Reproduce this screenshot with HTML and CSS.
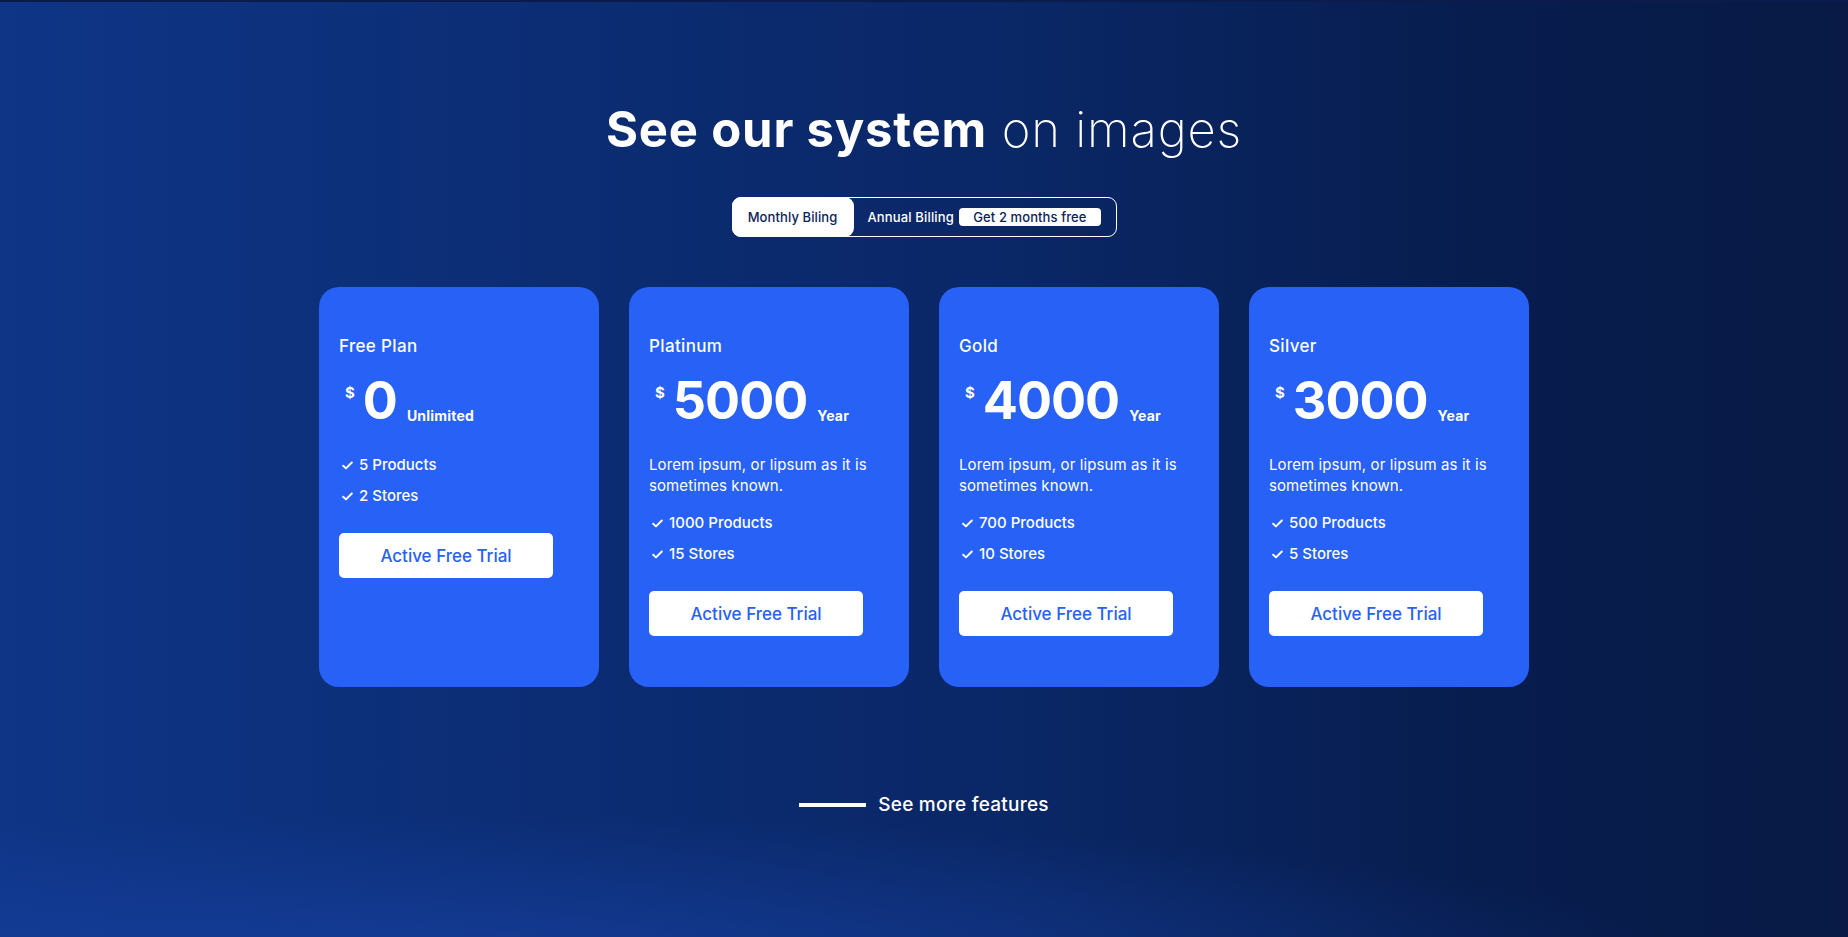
FILE: index.html
```html
<!DOCTYPE html>
<html lang="en">
<head>
<meta charset="utf-8">
<title>Pricing</title>
<link rel="stylesheet" href="styles.css">
</head>
<body>
<main class="page">
  <h1 class="title"><strong>See our system</strong> <span class="light">on images</span></h1>

  <div class="toggle">
    <button class="toggle-opt active">Monthly Biling</button>
    <div class="toggle-opt annual">Annual Billing <span class="badge">Get 2 months free</span></div>
  </div>

  <section class="cards">
    <article class="card">
      <h2 class="plan">Free Plan</h2>
      <div class="price"><span class="cur">$</span><span class="amount">0</span><span class="period">Unlimited</span></div>
      <ul class="features">
        <li><svg class="check" viewBox="0 0 12 10"><path d="M1.2 5.3 L4.3 8.2 L10.8 1.6"/></svg>5 Products</li>
        <li><svg class="check" viewBox="0 0 12 10"><path d="M1.2 5.3 L4.3 8.2 L10.8 1.6"/></svg>2 Stores</li>
      </ul>
      <a class="btn">Active Free Trial</a>
    </article>

    <article class="card">
      <h2 class="plan">Platinum</h2>
      <div class="price"><span class="cur">$</span><span class="amount">5000</span><span class="period">Year</span></div>
      <p class="desc">Lorem ipsum, or lipsum as it is sometimes known.</p>
      <ul class="features">
        <li><svg class="check" viewBox="0 0 12 10"><path d="M1.2 5.3 L4.3 8.2 L10.8 1.6"/></svg>1000 Products</li>
        <li><svg class="check" viewBox="0 0 12 10"><path d="M1.2 5.3 L4.3 8.2 L10.8 1.6"/></svg>15 Stores</li>
      </ul>
      <a class="btn">Active Free Trial</a>
    </article>

    <article class="card">
      <h2 class="plan">Gold</h2>
      <div class="price"><span class="cur">$</span><span class="amount">4000</span><span class="period">Year</span></div>
      <p class="desc">Lorem ipsum, or lipsum as it is sometimes known.</p>
      <ul class="features">
        <li><svg class="check" viewBox="0 0 12 10"><path d="M1.2 5.3 L4.3 8.2 L10.8 1.6"/></svg>700 Products</li>
        <li><svg class="check" viewBox="0 0 12 10"><path d="M1.2 5.3 L4.3 8.2 L10.8 1.6"/></svg>10 Stores</li>
      </ul>
      <a class="btn">Active Free Trial</a>
    </article>

    <article class="card">
      <h2 class="plan">Silver</h2>
      <div class="price"><span class="cur">$</span><span class="amount">3000</span><span class="period">Year</span></div>
      <p class="desc">Lorem ipsum, or lipsum as it is sometimes known.</p>
      <ul class="features">
        <li><svg class="check" viewBox="0 0 12 10"><path d="M1.2 5.3 L4.3 8.2 L10.8 1.6"/></svg>500 Products</li>
        <li><svg class="check" viewBox="0 0 12 10"><path d="M1.2 5.3 L4.3 8.2 L10.8 1.6"/></svg>5 Stores</li>
      </ul>
      <a class="btn">Active Free Trial</a>
    </article>
  </section>

  <a class="more"><span class="more-line"></span>See more features</a>
</main>
</body>
</html>
```

FILE: styles.css
```css
* { box-sizing: border-box; }

html, body {
  margin: 0;
  padding: 0;
}

body {
  font-family: "Inter", "Noto Sans", sans-serif;
  color: #fff;
  background: #0a2663;
}

.page {
  min-height: 937px;
  display: flex;
  flex-direction: column;
  align-items: center;
  padding-top: 98px;
  border-top: 2px solid #0a1b4c;
  background:
    radial-gradient(ellipse 70% 16% at 22% 103%, rgba(24, 66, 165, 0.7), rgba(24, 66, 165, 0) 100%),
    linear-gradient(90deg, #0e3586 0%, #0c2d74 30%, #0a2766 55%, #071d4e 80%, #081a45 100%);
}

.title {
  margin: 0;
  font-size: 49px;
  line-height: 60px;
  font-weight: 300;
  letter-spacing: 0.8px;
}

.title strong { font-weight: 700; }
.title .light { font-weight: 200; }

.toggle {
  margin-top: 37px;
  display: flex;
  align-items: center;
  width: 385px;
  height: 40px;
  border: 1px solid #fff;
  border-radius: 9px;
}

.toggle-opt {
  font-family: inherit;
  font-size: 13px;
  font-weight: 500;
  color: #fff;
}

.toggle-opt.active {
  width: 122px;
  height: 40px;
  margin: -1px 0 0 -1px;
  border: 0;
  border-radius: 9px;
  background: #fff;
  color: #0c2358;
  padding: 0;
  letter-spacing: 0.1px;
  cursor: pointer;
}

.toggle-opt.annual {
  display: flex;
  align-items: center;
  gap: 5px;
  padding-left: 14px;
  letter-spacing: 0.15px;
}

.badge {
  display: inline-flex;
  align-items: center;
  justify-content: center;
  width: 142px;
  height: 18px;
  border-radius: 4px;
  background: #fff;
  color: #0c2358;
  font-size: 13px;
  font-weight: 500;
  letter-spacing: 0.1px;
}

.cards {
  margin-top: 50px;
  display: flex;
  gap: 30px;
}

.card {
  width: 280px;
  height: 400px;
  background: #2761f6;
  border-radius: 20px;
  padding: 48px 20px 50px;
  display: flex;
  flex-direction: column;
  align-items: flex-start;
}

.plan {
  margin: 0;
  font-size: 17px;
  line-height: 22px;
  font-weight: 500;
  letter-spacing: 0.35px;
}

.price {
  margin-top: 18px;
  display: flex;
  align-items: baseline;
  padding-left: 6px;
}

.cur {
  align-self: flex-start;
  margin-top: 10px;
  font-size: 15px;
  line-height: 15px;
  font-weight: 700;
  margin-right: 8px;
}

.amount {
  font-size: 52px;
  line-height: 52px;
  font-weight: 700;
  letter-spacing: -1px;
}

.period {
  margin-left: 10px;
  font-size: 14px;
  font-weight: 700;
  letter-spacing: 0.2px;
  position: relative;
  top: 2px;
}

.desc {
  margin: 27px 0 0;
  font-size: 15px;
  line-height: 21px;
  font-weight: 400;
  letter-spacing: 0.1px;
}

.desc + .features { margin-top: 17px; }

.features {
  list-style: none;
  margin: 28px 0 0;
  padding: 0;
  display: flex;
  flex-direction: column;
  gap: 11px;
}

.features li {
  display: flex;
  align-items: center;
  font-size: 15px;
  line-height: 20px;
  font-weight: 500;
}

.check {
  width: 11px;
  height: 9px;
  margin: 0 6px 0 3px;
  fill: none;
  stroke: #fff;
  stroke-width: 2.2;
  stroke-linecap: round;
  stroke-linejoin: round;
}

.btn {
  margin-top: 27px;
  width: 214px;
  height: 45px;
  border-radius: 5px;
  background: #fff;
  color: #2761f6;
  font-size: 17px;
  font-weight: 500;
  display: flex;
  align-items: center;
  justify-content: center;
  cursor: pointer;
}

.more {
  margin-top: 106px;
  display: flex;
  align-items: center;
  gap: 12px;
  font-size: 19px;
  line-height: 24px;
  font-weight: 500;
  letter-spacing: 0.25px;
  color: #fff;
  cursor: pointer;
}

.more-line {
  width: 67px;
  height: 4px;
  background: #fff;
}
```
